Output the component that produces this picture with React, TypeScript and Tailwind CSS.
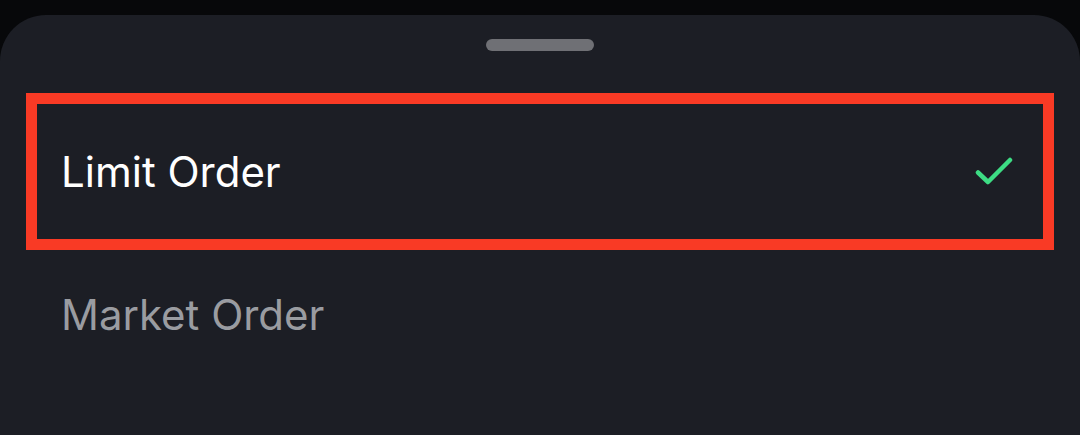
import React from 'react'

const options = [
  { label: 'Limit Order', selected: true },
  { label: 'Market Order', selected: false },
]

function Check () {
  return (
    <svg width="40" height="32" viewBox="0 0 40 32" fill="none">
      <path d="M3 16.5 L13 26 L35 4" stroke="#3ddc84" strokeWidth="4.5" strokeLinecap="round" strokeLinejoin="round" />
    </svg>
  )
}

export default function App () {
  return (
    <div className="w-[1080px] h-[435px] bg-[#07080a] pt-[15px] overflow-hidden" style={{ fontFamily: 'Inter, "Noto Sans", sans-serif' }}>
      <div className="h-full bg-[#1c1e25] rounded-t-[46px] flex flex-col">
        <div className="flex justify-center pt-[24px]">
          <div className="w-[108px] h-[12px] rounded-full bg-[#6f7075]" />
        </div>
        <div className="px-[26px] pt-[42px] flex flex-col">
          {options.map((opt) => (
            <div
              key={opt.label}
              className={
                opt.selected
                  ? 'h-[157px] border-[11px] border-[#f93a25] flex items-center justify-between pl-[24px] pr-[28px]'
                  : 'h-[130px] flex items-center pl-[35px]'
              }
            >
              <span className={opt.selected ? 'text-[42px] text-white leading-none' : 'text-[42px] text-[#9a9ca1] leading-none'}>
                {opt.label}
              </span>
              {opt.selected && <Check />}
            </div>
          ))}
        </div>
      </div>
    </div>
  )
}
